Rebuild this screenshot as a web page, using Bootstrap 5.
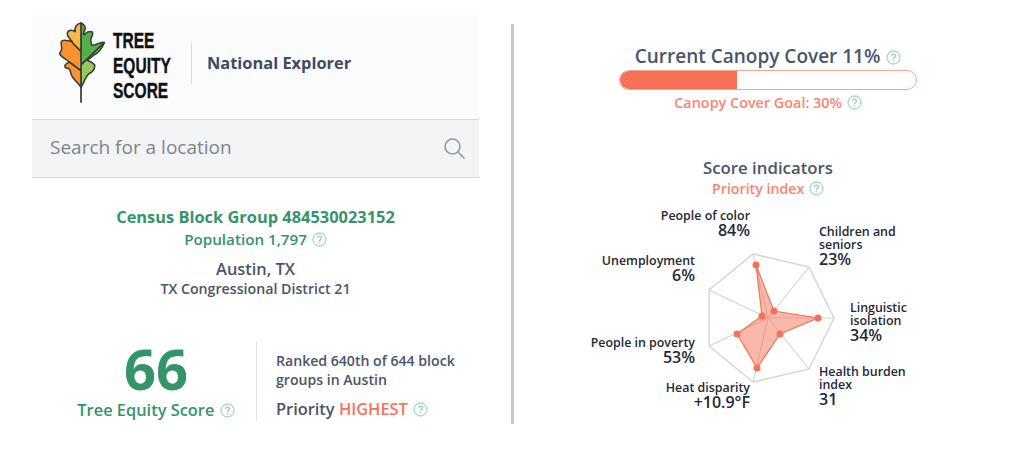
<!DOCTYPE html>
<html lang="en">
<head>
    <meta charset="UTF-8">
    <meta name="viewport" content="width=device-width, initial-scale=1.0">
    <title>Tree Equity Score - National Explorer</title>
    <link href="https://cdn.jsdelivr.net/npm/bootstrap@5.3.0/dist/css/bootstrap.min.css" rel="stylesheet">
    <style>
        :root {
            --tes-green: #359469;
            --tes-coral: #f9735b;
            --tes-slate: #4a5568;
        }
        html, body { height: 451px; overflow: hidden; background: #fff; }
        body { font-family: "Open Sans", sans-serif; color: var(--tes-slate); }
        .page-wrap { padding: 15px 0 0 32px; }
        .left-pane { width: 447px; }
        .head-bar { height: 104px; background: #fbfcfd; padding: 0 0 8px 26px; }
        .logo-words { font-family: "Liberation Sans", sans-serif; font-weight: 700; font-size: 22.5px; line-height: 25px; color: #111; -webkit-text-stroke: .4px #111; margin: 4px 0 0 7px; width: 64px; transform: scaleX(.69); transform-origin: left center; white-space: nowrap; }
        .head-sep { width: 1px; height: 42px; background: #d8dbe0; margin: 0 15px 0 14px; }
        .head-title { font-weight: 700; font-size: 16.4px; color: #3f4a61; }
        .search-bar { height: 59px; background: #f3f4f6; border-top: 1px solid #d5d8dd; border-bottom: 1px solid #d5d8dd; padding: 0 14px 2px 18px; font-size: 19px; color: #7c8490; }
        .block-title { font-weight: 700; font-size: 16.4px; line-height: 22px; color: var(--tes-green); margin-top: 28px; }
        .block-pop { font-weight: 600; font-size: 15.2px; line-height: 22px; color: var(--tes-green); }
        .block-city { font-weight: 600; font-size: 16.4px; line-height: 22px; margin-top: 8px; }
        .block-district { font-weight: 600; font-size: 14.2px; line-height: 20px; margin-top: -1px; }
        .score-row { margin-top: 42px; }
        .score-left { width: 224px; padding-left: 24px; }
        .score-num { font-weight: 700; font-size: 56px; line-height: 56px; color: var(--tes-green); margin-top: -1px; }
        .score-lbl { font-weight: 600; font-size: 16.4px; line-height: 22px; color: var(--tes-green); margin-top: 3px; }
        .score-right { border-left: 1px solid #dfe2e6; padding: 10px 0 0 19px; height: 80px; }
        .rank-text { font-weight: 600; font-size: 14.1px; line-height: 19px; white-space: nowrap; }
        .prio-text { font-weight: 600; font-size: 16.4px; line-height: 22px; margin-top: 9px; }
        .txt-coral { color: var(--tes-coral); }
        .help-ic { display: inline-block; width: 15px; height: 15px; vertical-align: -2px; margin-left: 1px; }
        .pane-sep { width: 3px; height: 400px; background: #c9c9c9; margin: 9px 0 0 32px; }
        .right-pane { width: 298px; margin-left: 105px; }
        .canopy-title { font-weight: 600; font-size: 19px; line-height: 24px; margin: 29px -20px 0; white-space: nowrap; }
        .canopy-track { height: 20px; border: 1.5px solid #f9a595; border-radius: 10px; overflow: hidden; background: #fff; margin-top: 2px; }
        .canopy-fill { height: 100%; background: #f67155; }
        .canopy-goal { font-weight: 600; font-size: 14.4px; line-height: 20px; margin-top: 3px; color: #fb8470; }
        .ind-title { font-weight: 600; font-size: 16.8px; line-height: 20px; margin-top: 45px; }
        .ind-sub { font-weight: 600; font-size: 14.2px; line-height: 20px; margin-top: 1px; color: #fb8470; }
        .radar-box { position: relative; height: 230px; margin-left: -28px; width: 360px; text-align: left; }
        .radar-box svg { position: absolute; left: 0; top: 0; }
        .rlabel { position: absolute; font-size: 12.4px; line-height: 13px; font-weight: 600; color: #1f2937; white-space: nowrap; }
        .rlabel b { display: block; font-size: 16px; font-weight: 600; line-height: 17px; }
        .rlabel.to-right { text-align: right; }
    </style>
</head>
<body>
    <svg width="0" height="0" class="position-absolute">
        <symbol id="helpIcon" viewBox="0 0 15 15">
            <circle cx="7.5" cy="7.5" r="6.5" fill="none" stroke="#a5dcc0" stroke-width="1.3"/>
            <path d="M5.6 6a1.9 1.9 0 1 1 3 1.5c-.7.4-1.1.7-1.1 1.5" fill="none" stroke="#7ccaa3" stroke-width="1.1"/>
            <circle cx="7.5" cy="10.8" r=".7" fill="#7ccaa3"/>
        </symbol>
    </svg>

    <div class="page-wrap d-flex align-items-start">
        <div class="left-pane">
            <div class="head-bar d-flex align-items-center">
                <!-- oak leaf logo -->
                <svg width="48" height="82" viewBox="0 0 48 84" class="flex-shrink-0">
                    <path d="M23 1C18 2 16 6 17 10C13 7 9 9 9 12C9 15 11 17 14 20C10 20 5 17 3 20C1 23 6 27 1 32C2 36 8 38 11 41C8 43 5 44 7 47C12 47 12 50 13 54C15 59 20 62 23 67Z" fill="#f7942d"/>
                    <path d="M23 1C18 2 16 6 17 10C13 7 9 9 9 12C9 15 11 17 14 20L23 30Z" fill="#fbb64d"/>
                    <path d="M23 1C26 2 28 5 27 8C26 10 25 12 26 13C28 11 31 9 34 10C37 12 33 15 33 18C33 21 33 23 35 24C38 24 43 20 47 21L23 44Z" fill="#56b04a"/>
                    <path d="M23 44L47 21C45 26 42 31 36 34C34 36 31 38 29 39C31 40 35 41 37 44C37 47 37 49 33 52C30 53 29 55 27 59C26 62 24 65 23 67Z" fill="#97c958"/>
                    <path d="M23 1C18 2 16 6 17 10C13 7 9 9 9 12C9 15 11 17 14 20C10 20 5 17 3 20C1 23 6 27 1 32C2 36 8 38 11 41C8 43 5 44 7 47C12 47 12 50 13 54C15 59 20 62 23 67C24 65 26 62 27 59C29 55 30 53 33 52C37 49 37 47 37 44C35 41 31 40 29 39C31 38 34 36 36 34C42 31 45 26 47 21C43 20 38 24 35 24C33 23 33 21 33 18C33 15 37 12 34 10C31 9 28 11 26 13C25 12 26 10 27 8C28 5 26 2 23 1Z" fill="none" stroke="#3b3b3b" stroke-width="1.6" stroke-linejoin="round"/>
                    <path d="M23 1V82M23 30L14 21M23 44L46 22M23 50L11 41" fill="none" stroke="#3b3b3b" stroke-width="1.8" stroke-linecap="round"/>
                </svg>
                <div class="logo-words">TREE<br>EQUITY<br>SCORE</div>
                <div class="head-sep"></div>
                <div class="head-title">National Explorer</div>
            </div>
            <div class="search-bar d-flex align-items-center justify-content-between">
                <span>Search for a location</span>
                <svg width="22" height="22" viewBox="0 0 22 22" fill="none" stroke="#8f97a3" stroke-width="1.6">
                    <circle cx="9.5" cy="9.5" r="7.5"/>
                    <path d="M15 15l6 6" stroke-linecap="round"/>
                </svg>
            </div>
            <div class="text-center">
                <div class="block-title">Census Block Group 484530023152</div>
                <div class="block-pop">Population 1,797 <svg class="help-ic"><use href="#helpIcon"/></svg></div>
                <div class="block-city">Austin, TX</div>
                <div class="block-district">TX Congressional District 21</div>
            </div>
            <div class="score-row d-flex">
                <div class="score-left text-center">
                    <div class="score-num">66</div>
                    <div class="score-lbl">Tree Equity Score <svg class="help-ic"><use href="#helpIcon"/></svg></div>
                </div>
                <div class="score-right flex-grow-1">
                    <div class="rank-text">Ranked 640th of 644 block<br>groups in Austin</div>
                    <div class="prio-text">Priority <span class="txt-coral">HIGHEST</span> <svg class="help-ic"><use href="#helpIcon"/></svg></div>
                </div>
            </div>
        </div>

        <div class="pane-sep flex-shrink-0"></div>

        <div class="right-pane text-center flex-shrink-0">
            <div class="canopy-title">Current Canopy Cover 11% <svg class="help-ic"><use href="#helpIcon"/></svg></div>
            <div class="canopy-track">
                <div class="canopy-fill" style="width: 39.4%"></div>
            </div>
            <div class="canopy-goal">Canopy Cover Goal: 30% <svg class="help-ic"><use href="#helpIcon"/></svg></div>
            <div class="ind-title">Score indicators</div>
            <div class="ind-sub">Priority index <svg class="help-ic"><use href="#helpIcon"/></svg></div>
            <!-- svg coords: page x - 591, page y - 198 -->
            <div class="radar-box">
                <svg width="360" height="230" viewBox="0 0 360 230">
                    <polygon points="162,55 218,68 243,119 218,170 162,183 118,147 118,91" fill="none" stroke="#d4d4d4" stroke-width="1.4"/>
                    <path d="M177,119L162,55M177,119L218,68M177,119L243,119M177,119L218,170M177,119L162,183M177,119L118,147M177,119L118,91" stroke="#d4d4d4" stroke-width="1.1"/>
                    <polygon points="165,66 183,112 227,119 189,135 166,169 146,135 171,117" fill="#f67155" fill-opacity=".5" stroke="#f67155" stroke-width="1.2"/>
                    <g fill="#f67155">
                        <circle cx="165" cy="66" r="3.5"/><circle cx="183" cy="112" r="3.5"/><circle cx="227" cy="119" r="3.5"/>
                        <circle cx="189" cy="135" r="3.5"/><circle cx="166" cy="169" r="3.5"/><circle cx="146" cy="135" r="3.5"/><circle cx="171" cy="117" r="3.5"/>
                    </g>
                </svg>
                <div class="rlabel to-right" style="right: 201px; top: 10px">People of color<b>84%</b></div>
                <div class="rlabel" style="left: 228px; top: 26px">Children and<br>seniors<b>23%</b></div>
                <div class="rlabel" style="left: 259px; top: 102px">Linguistic<br>isolation<b>34%</b></div>
                <div class="rlabel" style="left: 228px; top: 166px">Health burden<br>index<b>31</b></div>
                <div class="rlabel to-right" style="right: 201px; top: 182px">Heat disparity<b>+10.9°F</b></div>
                <div class="rlabel to-right" style="right: 256px; top: 137px">People in poverty<b>53%</b></div>
                <div class="rlabel to-right" style="right: 256px; top: 55px">Unemployment<b>6%</b></div>
            </div>
        </div>
    </div>

    <script src="https://cdn.jsdelivr.net/npm/bootstrap@5.3.0/dist/js/bootstrap.bundle.min.js"></script>
</body>
</html>
